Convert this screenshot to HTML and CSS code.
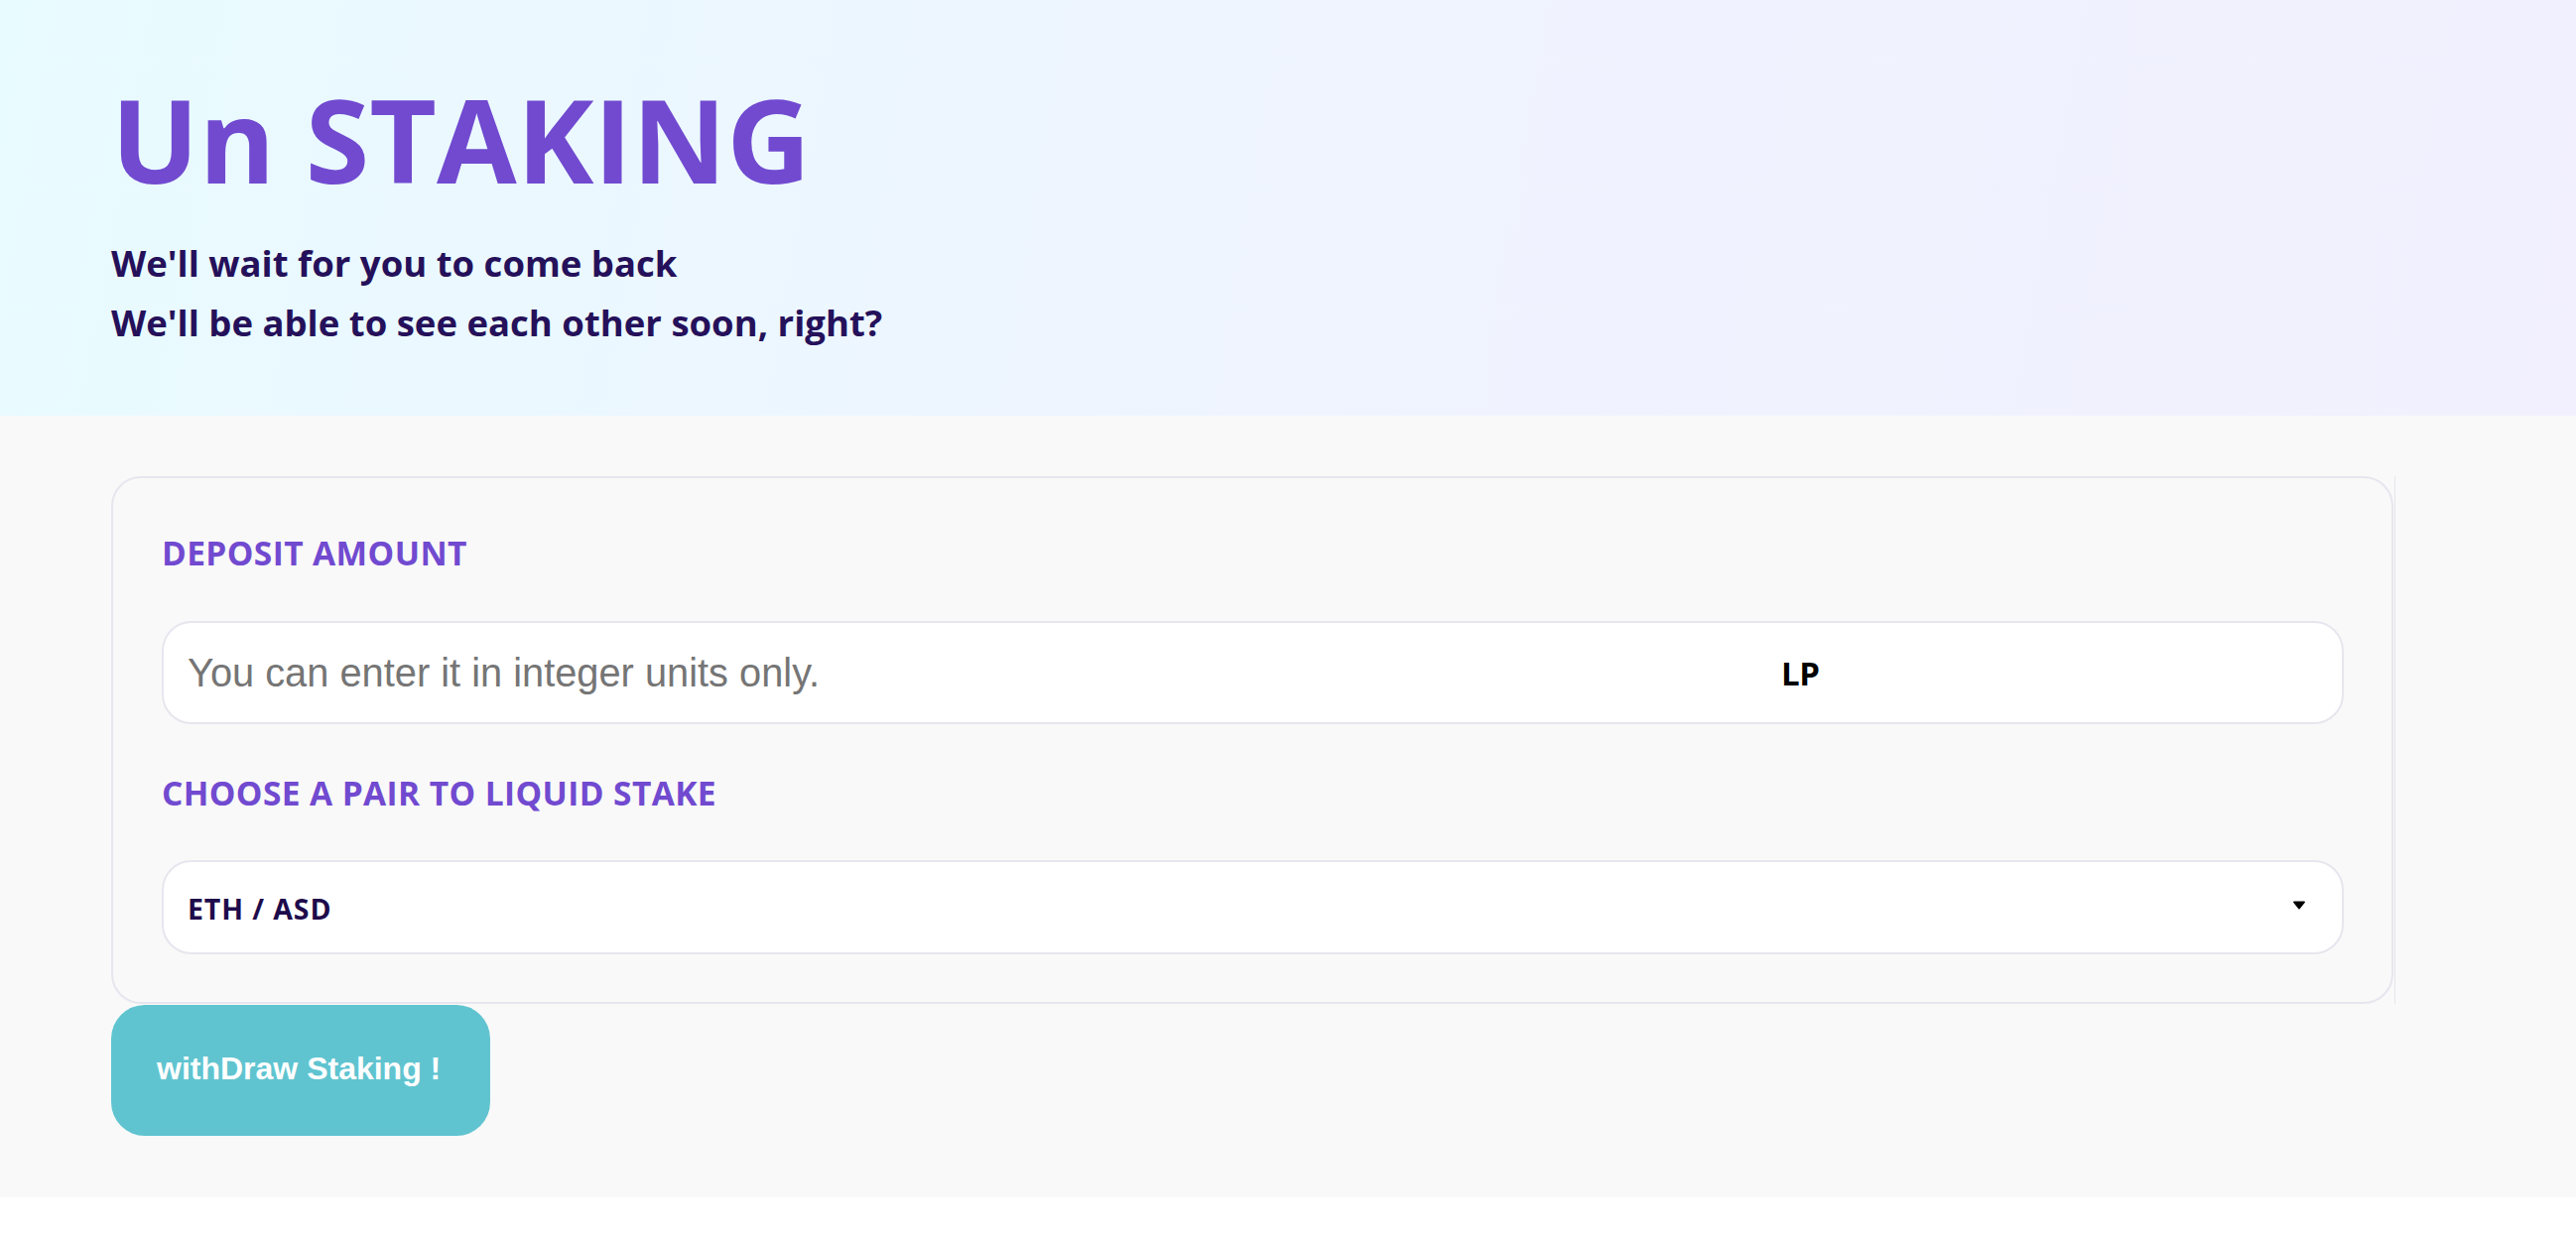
FILE: index.html
```html
<!DOCTYPE html>
<html lang="en">
<head>
<meta charset="utf-8">
<title>Un STAKING</title>
<link rel="stylesheet" href="styles.css">
</head>
<body>
<div class="app">
  <header class="hero">
    <h1 class="hero-title">Un STAKING</h1>
    <p class="hero-sub">We'll wait for you to come back</p>
    <p class="hero-sub">We'll be able to see each other soon, right?</p>
  </header>
  <main class="content">
    <div class="card-wrap">
      <section class="card">
        <h2 class="field-label">DEPOSIT AMOUNT</h2>
        <div class="amount-box">
          <input class="amount-input" type="text" placeholder="You can enter it in integer units only.">
          <span class="unit">LP</span>
        </div>
        <h2 class="field-label field-label-second">CHOOSE A PAIR TO LIQUID STAKE</h2>
        <div class="pair-select">
          <span class="pair-value">ETH / ASD</span>
          <svg class="caret" width="14" height="9" viewBox="0 0 14 9"><path d="M1 1.5 Q1 0.5 2 0.5 H12 Q13 0.5 13 1.5 L7.8 8 Q7 9 6.2 8 Z" fill="#000"/></svg>
        </div>
      </section>
    </div>
    <button class="withdraw-btn" type="button">withDraw Staking !</button>
  </main>
</div>
</body>
</html>
```

FILE: styles.css
```css
html, body {
  margin: 0;
  padding: 0;
  background: #ffffff;
}

.app {
  min-height: 1207px;
  background: #f9f9f9;
  font-family: "Open Sans", "Liberation Sans", sans-serif;
}

.hero {
  box-sizing: border-box;
  height: 419px;
  padding: 82px 0 0 112px;
  background: linear-gradient(100deg, #e8fbff 0%, #eff4ff 50%, #f2f0fe 100%);
}

.hero-title {
  margin: 0 0 37px;
  font-size: 117px;
  line-height: 116px;
  font-weight: 700;
  color: #714ad0;
  letter-spacing: 0;
}

.hero-sub {
  margin: 0;
  font-size: 36.5px;
  line-height: 60px;
  font-weight: 700;
  color: #25115a;
  letter-spacing: 0;
}

.content {
  padding: 61px 0 60px 112px;
}

.card-wrap {
  width: 2301px;
  border-right: 1px solid #e4e4ec;
}

.card {
  box-sizing: border-box;
  width: 2300px;
  border: 2px solid #e6e6ee;
  border-radius: 30px;
  padding: 55px 48px 48px 49px;
  background: #f9f9f9;
}

.field-label {
  margin: 0;
  font-size: 33.5px;
  line-height: 40px;
  font-weight: 700;
  color: #714ad0;
  letter-spacing: 0.4px;
}

.field-label-second {
  margin-top: 49px;
}

.amount-box {
  box-sizing: border-box;
  height: 104px;
  margin-top: 49px;
  border: 2px solid #e6e6ee;
  border-radius: 30px;
  background: #ffffff;
  display: flex;
  align-items: center;
  padding: 0 0 0 24px;
}

.amount-input {
  flex: none;
  width: 1580px;
  border: none;
  outline: none;
  background: transparent;
  padding: 0;
  font-family: "Liberation Sans", Arial, sans-serif;
  font-size: 39.8px;
  color: #222222;
}

.amount-input::placeholder {
  color: #757575;
}

.unit {
  margin-left: 26px;
  font-size: 33px;
  font-weight: 700;
  color: #000000;
  letter-spacing: -0.5px;
}

.pair-select {
  box-sizing: border-box;
  height: 95px;
  margin-top: 48px;
  border: 2px solid #e6e6ee;
  border-radius: 30px;
  background: #ffffff;
  display: flex;
  align-items: center;
  justify-content: space-between;
  padding: 0 36px 4px 24px;
}

.pair-value {
  font-size: 28.5px;
  font-weight: 700;
  color: #1e0b4b;
  letter-spacing: 0.9px;
  padding-top: 6px;
}

.caret {
  display: block;
}

.withdraw-btn {
  display: flex;
  align-items: center;
  box-sizing: border-box;
  width: 382px;
  height: 132px;
  margin-top: 1px;
  padding: 0 0 4px 46px;
  border: none;
  border-radius: 34px;
  background: #60c4d0;
  color: #ffffff;
  font-family: "Liberation Sans", Arial, sans-serif;
  font-size: 32px;
  font-weight: 700;
  cursor: pointer;
}
```
